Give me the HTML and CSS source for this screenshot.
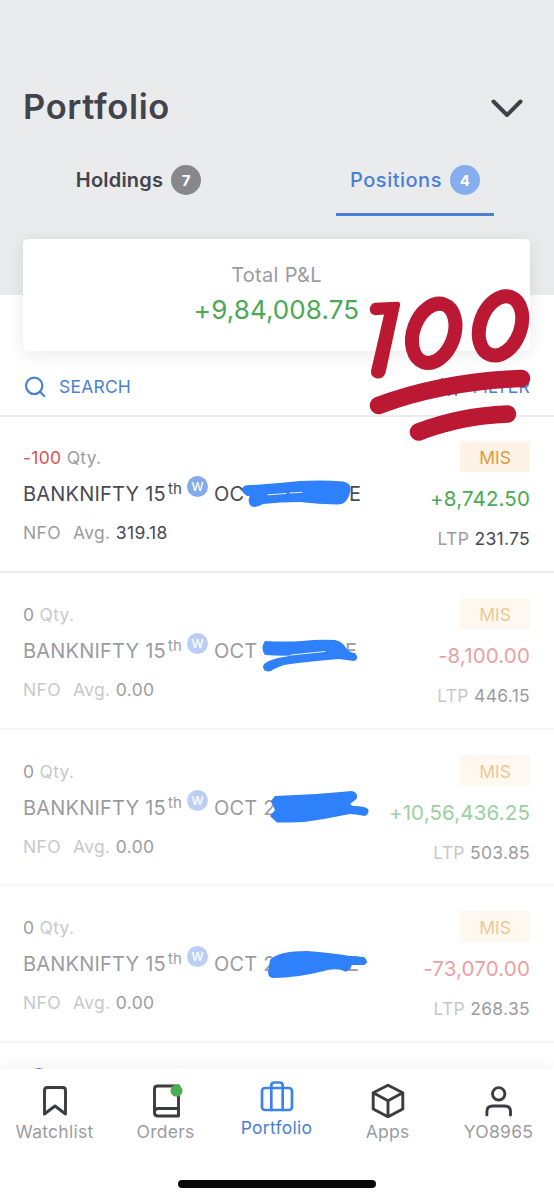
FILE: index.html
```html
<!DOCTYPE html>
<html lang="en">
<head>
<meta charset="utf-8">
<title>Portfolio</title>
<link rel="stylesheet" href="styles.css">
</head>
<body>
<div class="screen">
  <header class="header">
    <div class="title-row">
      <h1 class="title">Portfolio</h1>
      <svg class="chevron" width="34" height="22" viewBox="0 0 34 22"><path d="M3.5 3.5 17 17 30.500 3.500"/></svg>
    </div>
    <nav class="tabs">
      <div class="tab"><span class="tab-label holdings">Holdings</span><span class="count">7</span></div>
      <div class="tab active"><span class="tab-label positions">Positions</span><span class="count">4</span></div>
    </nav>
  </header>

  <section class="summary">
    <div class="summary-label">Total P&amp;L</div>
    <div class="summary-value">+9,84,008.75</div>
  </section>

  <div class="tools">
    <div class="tool">
      <svg class="search-icon" width="22" height="22" viewBox="0 0 22 22"><circle cx="10.200" cy="9.800" r="8.200"/><path d="m16.200 16 4 4"/></svg>
      <span class="search-label">SEARCH</span>
    </div>
    <div class="tool">
      <svg class="filter-icon" width="20" height="20" viewBox="0 0 20 20"><path d="M3 2v7M3 13v5M10 2v3M10 9v9M17 2v9M17 15v3M0 13h6M7 5h6M14 11h6"/></svg>
      <span class="filter-label">FILTER</span>
    </div>
  </div>

  <main class="list">
    <article class="row">
      <div class="left">
        <div class="qty"><span class="neg">-100</span> Qty.</div>
        <div class="name"><span class="sym">BANKNIFTY 15</span><span class="th">th</span><span class="week">W</span><span class="month">OCT</span><span class="tail tail-1">E</span></div>
        <div class="avg"><span class="exch">NFO</span><span>Avg. <b>319.18</b></span></div>
      </div>
      <div class="right">
        <div class="tag">MIS</div>
        <div class="pnl pos">+8,742.50</div>
        <div class="ltp">LTP <b>231.75</b></div>
      </div>
    </article>
    <article class="row closed">
      <div class="left">
        <div class="qty"><b>0</b> Qty.</div>
        <div class="name"><span class="sym">BANKNIFTY 15</span><span class="th">th</span><span class="week">W</span><span class="month">OCT</span><span class="tail tail-2">E</span></div>
        <div class="avg"><span class="exch">NFO</span><span>Avg. <b>0.00</b></span></div>
      </div>
      <div class="right">
        <div class="tag">MIS</div>
        <div class="pnl neg">-8,100.00</div>
        <div class="ltp">LTP <b>446.15</b></div>
      </div>
    </article>
    <article class="row closed">
      <div class="left">
        <div class="qty"><b>0</b> Qty.</div>
        <div class="name"><span class="sym">BANKNIFTY 15</span><span class="th">th</span><span class="week">W</span><span class="month">OCT 2</span></div>
        <div class="avg"><span class="exch">NFO</span><span>Avg. <b>0.00</b></span></div>
      </div>
      <div class="right">
        <div class="tag">MIS</div>
        <div class="pnl pos">+10,56,436.25</div>
        <div class="ltp">LTP <b>503.85</b></div>
      </div>
    </article>
    <article class="row closed">
      <div class="left">
        <div class="qty"><b>0</b> Qty.</div>
        <div class="name"><span class="sym">BANKNIFTY 15</span><span class="th">th</span><span class="week">W</span><span class="month">OCT 2</span><span class="tail tail-4">E</span></div>
        <div class="avg"><span class="exch">NFO</span><span>Avg. <b>0.00</b></span></div>
      </div>
      <div class="right">
        <div class="tag">MIS</div>
        <div class="pnl neg">-73,070.00</div>
        <div class="ltp">LTP <b>268.35</b></div>
      </div>
    </article>
    <div class="more"><span class="more-dot"></span></div>
  </main>

  <footer class="bottom">
    <div class="nav">
      <div class="item">
        <svg width="36" height="36" viewBox="0 0 36 36"><path d="M7.500 32V8.500Q7.500 5.500 10.500 5.500H25.500Q28.500 5.500 28.500 8.500V32L18 24Z"/></svg>
        <span>Watchlist</span>
      </div>
      <div class="item">
        <svg width="36" height="36" viewBox="0 0 36 36"><path d="M30.500 4H9.500Q6.500 4 6.500 7V30.500Q6.500 34 10 34H30.500ZM30.500 26.500H10Q6.500 26.500 6.500 30"/><circle class="dot" cx="28.500" cy="8.800" r="6"/></svg>
        <span>Orders</span>
      </div>
      <div class="item active">
        <svg width="36" height="36" viewBox="0 0 36 36"><rect x="3" y="10" width="30" height="22" rx="3"/><path d="M12.300 32V7.500Q12.300 4.500 15.300 4.500H20.700Q23.700 4.500 23.700 7.500V32"/></svg>
        <span>Portfolio</span>
      </div>
      <div class="item">
        <svg width="36" height="36" viewBox="0 0 36 36"><path d="M18 3.300 32.800 10.800V27L18 34.800 3.200 27V10.800ZM3.200 10.800 18 18.800 32.800 10.800M18 18.800V34.800"/></svg>
        <span>Apps</span>
      </div>
      <div class="item">
        <svg width="36" height="36" viewBox="0 0 36 36"><circle cx="17.700" cy="11.800" r="6.200"/><path d="M5.900 33V29.500Q5.900 24 11.700 24H23.700Q29.500 24 29.500 29.500V33"/></svg>
        <span>YO8965</span>
      </div>
    </div>
    <div class="home-bar"></div>
  </footer>

  <svg class="marks" width="554" height="1200" viewBox="0 0 554 1200">
    <g class="ink">
      <path d="M245 485.500 Q272 484 300 481 Q325 480 343 481.500 Q351 483 350.500 489 Q350 496 346 501 Q343 504.500 337 504.500 Q318 504 300 502 Q280 502 263 504 Q257 508 251.500 506.500 Q247.500 503 249 498 L252 495.500 L247 496 Q238 490 245 485.500Z"/>
      <path d="M265 641 Q285 642 302 641 Q320 639 335 640 Q343 642 346 648 Q350 653 355 653 Q360 659 354 661 Q347 660 339 659 Q303 662 284 665 Q275 668 271 671 Q263 673 263 666 Q265 661 278 658 L292 655.500 Q278 656 265 655 Q260 648 265 641Z"/>
      <path d="M275 796 Q314 795 352 791 Q359 793 356.500 799 L350 804 L353 806 Q365 806 368 809 Q370 813 365 816 Q358 814.500 350 814 Q326 819 304 822 Q290 822.500 277 822.500 L270 816 L275 810 L271 801Z"/>
      <path d="M270 960 Q278 951 307 951 Q332 953 350 956 L364 957 Q370 962 364 965 L352 965 L349 970 Q346 973 342 970 Q332 968 324 971 Q296 978 274 978 Q268 978 268 972Z"/>
    </g>
    <path class="gap" d="M268 494.800 L286 493.500 M290 493 L302 492.300"/>
    <path class="gap" d="M291 655 L325 651.500"/>
    <g class="hundred">
      <path class="solid" d="M375 302.800 L397.500 301.700 Q400.500 302 400 305.500 L385.500 373 Q383.500 378.800 377 378.500 Q370.500 377 371 371 L384 314.500 L375.500 315.300 Q369.500 314.500 369.700 309 Q370.500 303.500 375 302.800Z"/>
      <ellipse cx="433.700" cy="333.300" rx="20.300" ry="30.600" transform="rotate(20 433.700 333.300)"/>
      <ellipse cx="500.500" cy="325.900" rx="20.300" ry="30.600" transform="rotate(20 500.500 325.900)"/>
      <path class="line" d="M378.500 405.500 Q443 381.500 521.500 378.500"/>
      <path class="line" d="M418.500 432 Q460 416 507.500 414"/>
    </g>
  </svg>
</div>
</body>
</html>
```
FILE: styles.css
```css
* { box-sizing: border-box; }
body { margin: 0; background: #fff; font-family: Inter, "Liberation Sans", sans-serif; color: #4a4a52; }
.screen { position: relative; width: 554px; height: 1200px; overflow: hidden; display: flex; flex-direction: column; font-weight: 400; }
svg { flex: none; fill: none; stroke-linecap: round; stroke-linejoin: round; }
b { font-weight: 400; color: #4a4a52; }

.header { flex: none; height: 295px; padding: 82px 0 0; background: #eaebed; color: #43434c; }
.title-row { display: flex; align-items: center; justify-content: space-between; height: 50px; padding: 0 30px 0 23px; }
.title { margin: 0; font-size: 34.500px; line-height: 50px; font-weight: 600; letter-spacing: 0.65px; }
.chevron { stroke: #40404b; stroke-width: 4; margin-top: 4px; }
.tabs { display: grid; grid-template-columns: 1fr 1fr; padding-top: 17px; }
.tab { display: flex; align-items: center; gap: 8px; width: 158px; height: 67px; padding-bottom: 2px; justify-content: center; justify-self: center; border-bottom: 3px solid transparent; }
.tab.active { color: #4a80d4; border-color: #4a80d4; margin-right: 1px; }
.tab-label { font-size: 20px; font-weight: 600; letter-spacing: .2px; }
.positions { font-weight: 500; letter-spacing: .5px; }
.count { width: 30px; height: 30px; border-radius: 50%; background: #87888b; color: #fff; font-size: 15px; line-height: 31px; font-weight: 700; text-align: center; }
.active .count { background: #86aeee; }

.summary { flex: none; position: relative; width: 507px; height: 112px; margin: -56px 0 0 23px; padding-top: 21px; background: #fff; border-radius: 5px; box-shadow: 0 3px 18px rgba(0,0,0,.09); text-align: center; }
.summary-label { font-size: 20px; line-height: 30px; letter-spacing: .3px; color: #9b9ba1; }
.summary-value { font-size: 26px; line-height: 40px; letter-spacing: .1px; color: #4ba854; }

.tools { flex: none; display: flex; justify-content: space-between; height: 65.500px; padding: 7px 24px 0; align-items: flex-start; border-bottom: 2px solid #ececee; color: #4a80d4; }
.tool { display: flex; align-items: center; gap: 13px; height: 57px; font-size: 17.5px; letter-spacing: .2px; }
.tool svg { stroke: #4a80d4; stroke-width: 2.2; }

.list { flex: none; height: 652.500px; }
.row { display: flex; justify-content: space-between; height: 156.670px; padding: 23.700px 24px 0 23px; border-bottom: 2px solid #ececee; }
.closed > div { opacity: .55; }
.closed { border-color: #f6f6f7; }
.qty { font-size: 17.500px; line-height: 36px; letter-spacing: .3px; color: #9b9ba1; }
.name { display: flex; height: 35px; font-size: 20px; line-height: 36px; letter-spacing: .2px; white-space: pre; }
.sym { width: 145px; }
.th { width: 19px; font-size: 15px; line-height: 25px; font-weight: 400; letter-spacing: 0; }
.week { width: 21px; height: 21px; border-radius: 50%; background: #84a9ec; color: #fff; font-size: 12px; line-height: 21px; font-weight: 500; letter-spacing: 0; text-align: center; }
.month { margin-left: 6px; width: 45px; }
.tail { margin-left: 90px; }
.tail-2 { margin-left: 86px; }
.tail-4 { margin-left: 88px; }
.avg { display: flex; gap: 12px; font-size: 17.500px; line-height: 44px; letter-spacing: .35px; color: #9b9ba1; }
.right { display: flex; flex-direction: column; align-items: flex-end; padding-top: 1px; }
.tag { width: 70px; height: 31px; background: #fff3e7; color: #e19a35; font-size: 17.500px; line-height: 33px; text-align: center; border-radius: 2px; }
.pnl { font-size: 20.500px; line-height: 54px; letter-spacing: .15px; }
.ltp { font-size: 17.500px; line-height: 25px; letter-spacing: .3px; color: #9b9ba1; }
.pos { color: #4ba854; }
.neg { color: #da5252; }
.more { padding: 25px 0 0 30px; }
.more-dot { display: block; width: 18px; height: 18px; border-radius: 50%; background: #3e72c4; }

.bottom { flex: none; position: relative; height: 131px; background: #fff; box-shadow: 0 -2px 16px rgba(0,0,0,.06); }
.nav { display: grid; grid-template-columns: repeat(5, 1fr); height: 111px; margin-left: -1px; padding-top: 13px; }
.item { display: flex; flex-direction: column; align-items: center; color: #9b9ba1; font-size: 17.500px; line-height: 24px; letter-spacing: .25px; }
.item svg { stroke: #3b3b43; stroke-width: 2.900; }
.item span { margin-top: 2px; }
.item .dot { fill: #4caf50; stroke: none; }
.item.active { color: #4a80d4; margin-top: -4px; }
.item.active svg { stroke: #3c82ee; stroke-width: 2.700; }
.home-bar { width: 198px; height: 8px; margin: 0 auto; border-radius: 4px; background: #080808; }

.marks { position: absolute; left: 0; top: 0; }
.ink { fill: #2f80fb; }
.gap { stroke: #fff; stroke-width: .900; }
.hundred { stroke: #bb1933; stroke-width: 14px; }
.hundred .solid { fill: #bb1933; stroke: none; }
.hundred .line { stroke-width: 17.500px; }
```
